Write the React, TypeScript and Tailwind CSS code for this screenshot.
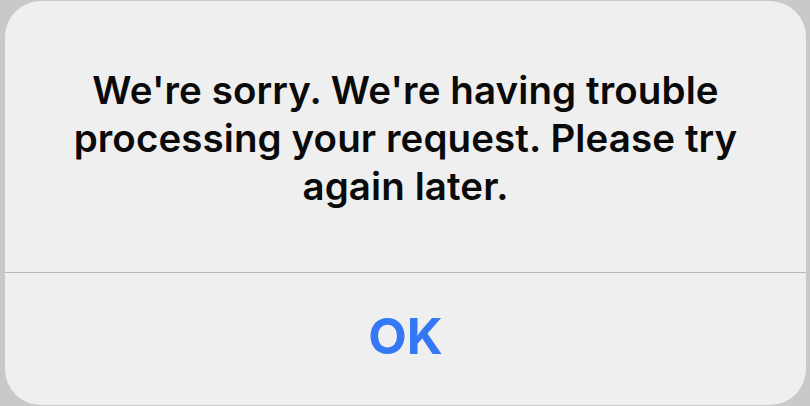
export default function App() {
  return (
    <div className="w-[810px] h-[406px] bg-[#c9c9c9] overflow-hidden relative" style={{ fontFamily: 'Inter, "Liberation Sans", sans-serif' }}>
      <div className="absolute left-[5px] top-[1px] w-[801px] h-[404px] bg-[#efeff0] rounded-[36px] flex flex-col">
        <div className="h-[271px] flex justify-center px-8 pt-[65px]">
          <p className="text-center text-[38.5px] leading-[48px] font-semibold text-[#0a0a0a] tracking-[0.1px]">
            We're sorry. We're having trouble processing your request. Please try again later.
          </p>
        </div>
        <div className="h-px bg-[#b8b8ba]" />
        <div className="flex-1 flex items-center justify-center pb-[6px]">
          <span className="text-[50px] font-bold text-[#3478f6] leading-none">OK</span>
        </div>
      </div>
    </div>
  );
}
